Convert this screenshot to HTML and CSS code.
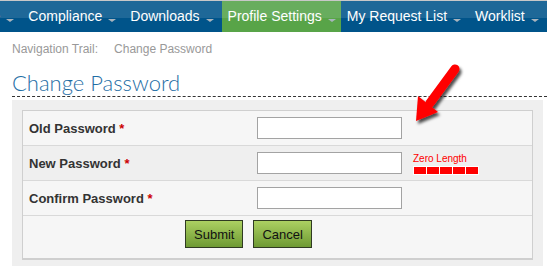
FILE: index.html
```html
<!DOCTYPE html>
<html lang="en">
<head>
  <meta charset="UTF-8" />
  <title>Change Password</title>
  <link rel="stylesheet" href="styles.css">
</head>
<body>
  <nav class="menu">
    <a class="menu-item first">Home<span class="caret"></span></a>
    <a class="menu-item">Compliance<span class="caret"></span></a>
    <a class="menu-item">Downloads<span class="caret"></span></a>
    <a class="menu-item active">Profile Settings<span class="caret"></span></a>
    <a class="menu-item">My Request List<span class="caret"></span></a>
    <a class="menu-item">Worklist<span class="caret"></span></a>
  </nav>

  <div class="page">
    <div class="trail">
      <span>Navigation Trail:</span>
      <span>Change Password</span>
    </div>

    <h1 class="title">Change Password</h1>

    <div class="form-box">
      <div class="form-table">
        <div class="row">
          <label class="label">Old Password <span class="req">*</span></label>
          <input class="field" type="password" />
        </div>
        <div class="row alt">
          <label class="label">New Password <span class="req">*</span></label>
          <input class="field" type="password" />
          <div class="strength">
            <div class="strength-text">Zero Length</div>
            <div class="strength-bar">
              <span></span><span></span><span></span><span></span><span></span>
            </div>
          </div>
        </div>
        <div class="row">
          <label class="label">Confirm Password <span class="req">*</span></label>
          <input class="field" type="password" />
        </div>
        <div class="row buttons">
          <button class="btn">Submit</button>
          <button class="btn">Cancel</button>
        </div>
      </div>
    </div>
  </div>

  <svg class="pointer" width="547" height="266" viewBox="0 0 547 266">
    <defs>
      <filter id="shade" x="-50%" y="-50%" width="200%" height="200%">
        <feDropShadow dx="2" dy="3" stdDeviation="1.6" flood-color="#000" flood-opacity="0.7" />
      </filter>
    </defs>
    <g filter="url(#shade)">
      <line x1="455" y1="69" x2="430" y2="103" stroke="#ff0000" stroke-width="9" stroke-linecap="round" />
      <polygon points="416,121 438,112 418,96" fill="#ff0000" />
    </g>
  </svg>
</body>
</html>
```

FILE: styles.css
```css
* {
  box-sizing: border-box;
}

body {
  margin: 0;
  font-family: Arial, "Liberation Sans", Arimo, Helvetica, sans-serif;
  background: #fff;
  position: relative;
  overflow: hidden;
  height: 266px;
}

.menu {
  display: flex;
  height: 32px;
  border-top: 1px solid #c8c8c8;
  background: linear-gradient(#1e6898 0, #1e6898 17px, #00548a 17px, #00548a 100%);
  white-space: nowrap;
}

.menu-item {
  display: flex;
  align-items: center;
  padding: 0 8px 2px 6px;
  color: #fff;
  font-size: 14px;
}

.menu-item.first {
  margin-left: -43px;
}

.menu-item.active {
  background: linear-gradient(#68ad5e 0, #68ad5e 17px, #58a448 17px, #58a448 100%);
  padding-right: 5px;
}

.caret {
  width: 0;
  height: 0;
  margin: 10px 0 0 6px;
  border-left: 4px solid transparent;
  border-right: 4px solid transparent;
  border-top: 3px solid #a9b4bd;
}

.page {
  padding: 0 0 0 12px;
}

.trail {
  display: flex;
  gap: 16px;
  padding-top: 10px;
  color: #999;
  font-size: 12px;
}

.title {
  margin: 15px 0 0;
  padding-bottom: 1px;
  font-family: Lato, "DejaVu Sans", sans-serif;
  font-weight: 300;
  font-size: 22px;
  color: #1f6ea5;
  border-bottom: 1px dashed #333;
  line-height: 24px;
}

.form-box {
  margin: 3px 4px 0 0;
  padding: 10px 10px 8px;
  background: #efefef;
}

.form-table {
  border: 1px solid #cfcfcf;
  border-bottom-width: 2px;
  background: #f6f6f6;
}

.row {
  display: flex;
  align-items: flex-start;
  height: 35px;
  padding-top: 6px;
  border-bottom: 1px solid #d9d9d9;
}

.row.alt {
  background: #efefef;
}

.label {
  width: 234px;
  padding: 4px 0 0 6px;
  font-size: 13px;
  font-weight: bold;
  color: #333;
}

.req {
  color: #cc0000;
}

.field {
  width: 145px;
  height: 22px;
  margin: 0;
  border: 1px solid #a3a3a3;
  background: #fff;
}

.strength {
  margin: 1px 0 0 11px;
}

.strength-text {
  color: #ff0000;
  font-size: 10px;
  line-height: 11px;
}

.strength-bar {
  display: flex;
  gap: 1px;
  margin-top: 2px;
  padding: 1px;
  background: #fff;
}

.strength-bar span {
  width: 12px;
  height: 7px;
  background: #ff0000;
}

.row.buttons {
  height: 42px;
  padding: 4px 0 0 162px;
  gap: 10px;
  border-bottom: 0;
}

.btn {
  height: 28px;
  padding: 0 8px;
  border: 1px solid #2f3a22;
  background: linear-gradient(#acd062, #6e9a33);
  font-family: Arial, "Liberation Sans", Arimo, Helvetica, sans-serif;
  font-size: 13px;
  color: #111;
}

.pointer {
  position: absolute;
  top: 0;
  left: 0;
}
```
